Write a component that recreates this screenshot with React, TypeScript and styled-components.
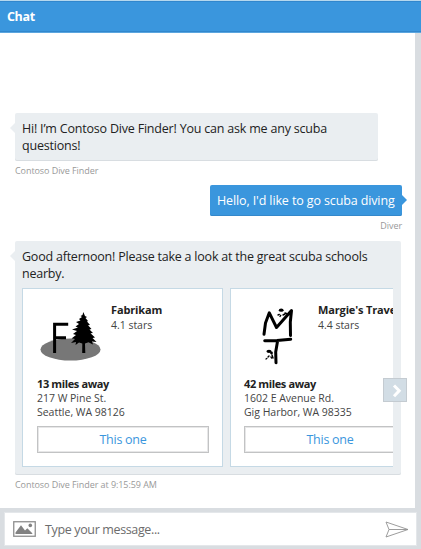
import React from "react";
import styled, { createGlobalStyle } from "styled-components";

const Global = createGlobalStyle`
  *, *::before, *::after { box-sizing: border-box; }
  body { margin: 0; background: #d9dde1; font-family: "Open Sans", "Noto Sans", sans-serif; }
  #root { height: 549px; }
`;

const Window = styled.div`
  width: 421px;
  height: 549px;
  display: flex;
  flex-direction: column;
  overflow: hidden;
  background: #d9dde1;
`;

const Header = styled.header`
  flex: none;
  height: 33px;
  padding: 0 7px;
  border-top: 1px solid #b5d8ee;
  border-bottom: 1px solid #5ba6df;
  box-shadow: inset 0 1px #3187cd, inset 0 -1px #3187cd;
  background: #3a96dd;
  color: #fff;
  font-size: 12.5px;
  font-weight: 700;
  line-height: 31px;
  letter-spacing: -0.35px;
`;

const Transcript = styled.main`
  flex: none;
  width: 415px;
  height: 475px;
  padding: 80px 13px 0 15px;
  background: #fff;
  display: flex;
  flex-direction: column;
  align-items: flex-start;
`;

const Bubble = styled.div<{ $own?: boolean; $width: number; $height: number }>`
  position: relative;
  flex: none;
  align-self: ${(p) => (p.$own ? "flex-end" : "flex-start")};
  width: ${(p) => p.$width}px;
  height: ${(p) => p.$height}px;
  padding: ${(p) => (p.$own ? "7px 6px 7px 7px" : "7px 7px 0")};
  border-radius: 2px;
  background: ${(p) => (p.$own ? "#3a96dd" : "#eaeef1")};
  box-shadow: inset 0 -1px ${(p) => (p.$own ? "#3488cb" : "#d8dde1")};
  color: ${(p) => (p.$own ? "#fff" : "#222")};

  &::before {
    content: "";
    position: absolute;
    top: 10px;
    ${(p) => (p.$own ? "right: -5px" : "left: -5px")};
    border: 5px solid transparent;
    ${(p) => (p.$own ? "border-right-width: 0; border-left-color: #3a96dd" : "border-left-width: 0; border-right-color: #eaeef1")};
  }
`;

const Message = styled.p<{ $spacing: number }>`
  margin: 0;
  font-size: 12.5px;
  line-height: 17px;
  letter-spacing: ${(p) => p.$spacing}px;
  white-space: nowrap;
`;

const Caption = styled.div<{ $own?: boolean; $gap: number }>`
  align-self: ${(p) => (p.$own ? "flex-end" : "flex-start")};
  height: 12px;
  margin: 4px 0 ${(p) => p.$gap}px;
  color: #999;
  font-size: 9px;
  line-height: 12px;
  letter-spacing: -0.07px;
  white-space: nowrap;
`;

const Carousel = styled.div`
  display: flex;
  gap: 7px;
  width: 371.4px;
  margin-top: 6px;
  overflow: hidden;
`;

const Card = styled.article<{ $inset: number }>`
  flex: none;
  width: 201px;
  height: 179px;
  padding: 14px 13px 0 ${(p) => p.$inset}px;
  border: 1px solid #c5d9e5;
  background: #fff;
`;

const CardTop = styled.div`
  display: flex;
  height: 74px;
`;

const Logo = styled.svg`
  flex: none;
  width: 74px;
  height: 66px;
`;

const Title = styled.div<{ $spacing: number }>`
  color: #222;
  font-size: 11px;
  font-weight: 700;
  line-height: 14px;
  letter-spacing: ${(p) => p.$spacing}px;
  white-space: nowrap;
`;

const Detail = styled.div`
  color: #444;
  font-size: 10.5px;
  line-height: 14px;
  letter-spacing: -0.02px;
  white-space: nowrap;
`;

const Rating = styled(Detail)`
  margin-top: 1px;
`;

const Choice = styled.button`
  display: block;
  width: 172px;
  height: 27px;
  margin-top: 7px;
  padding: 0;
  border: 1px solid #c2c3c4;
  box-shadow: inset 0 0 0 1px #e7e7e8;
  background: #fff;
  color: #3a96dd;
  font: 12.5px/25px "Open Sans", sans-serif;
  letter-spacing: -0.25px;
`;

const Next = styled.button`
  position: absolute;
  right: -6px;
  top: 137px;
  width: 24px;
  height: 24px;
  padding: 0;
  border: 1px solid #c4cbd1;
  background: #d2dde5;
  display: flex;
  align-items: center;
  justify-content: center;
`;

const Composer = styled.footer`
  display: flex;
  align-items: center;
  width: 413px;
  height: 34px;
  margin: 4px 0 0 4px;
  padding: 0 7px 0 8px;
  border: 1px solid #e4e7ea;
  background: #fff;
`;

const Placeholder = styled.span`
  flex: 1;
  margin-left: 9px;
  color: #6c6c6c;
  font-size: 12.5px;
  letter-spacing: -0.36px;
`;

const Fabrikam = () => (
  <Logo viewBox="37 303 74 66">
    <ellipse cx="70.5" cy="349.5" rx="30" ry="11" fill="#777" />
    <path d="M54.6 353V324.3H68.2M54.6 337.8H66" fill="none" stroke="#000" strokeWidth="3" />
    <path d="M83.3 312L85 316L87 317L85.5 318L88 321L87 321.5L90 325L88 325.3L91.5 329L89.5 329.5L93 333L90.5 333.3L95 337.5L92.5 338L96.5 342L92 341.5L93 344.5L88.5 342.3L85 343.5L85.3 353H82.2L82.3 343.5L79 342.5L75.5 345L76 342L71 343L75 339L71.5 338.5L76 335L73 334L77 331L72 329.5L78 327.5L75.5 326.5L79 324L76 322L80.5 320.5L79 319L82 317L80.5 316L82.5 315Z" />
  </Logo>
);

const Margies = () => (
  <Logo viewBox="244 303 74 66">
    <g fill="none" stroke="#000" strokeLinecap="round" strokeLinejoin="round">
      <path d="M264 334.3L265.5 323L269.3 312.8L276.5 327.5L291.5 310.5L290.3 322L290.5 335.5" strokeWidth="3" />
      <path d="M264.7 340.8L277 340.5L290.7 339.2M277.5 341.5L275.7 352L276 362.7" strokeWidth="3" />
      <path d="M278 315l1.3-.6M280 316.5l.7-1.2M283 315l2-1M285 313l1.5.4M266 359l.8-.5M268 357l1-1M271 357l.5 1M272 355l1 3" strokeWidth="1.4" />
    </g>
    <ellipse cx="281.2" cy="310.2" rx="2.4" ry="1.6" />
    <ellipse cx="269" cy="351.3" rx="2.6" ry="1.6" />
    <circle cx="271.5" cy="353" r="1.4" />
  </Logo>
);

const schools = [
  { name: "Fabrikam", inset: 14, stars: "4.1 stars", distance: "13 miles away", street: "217 W Pine St.", city: "Seattle, WA 98126", Art: Fabrikam },
  { name: "Margie's Travel", inset: 13, stars: "4.4 stars", distance: "42 miles away", street: "1602 E Avenue Rd.", city: "Gig Harbor, WA 98335", Art: Margies },
];

export default function App() {
  return (
    <Window>
      <Global />
      <Header>Chat</Header>
      <Transcript>
        <Bubble $width={363} $height={48}>
          <Message $spacing={-0.2}>Hi! I’m Contoso Dive Finder! You can ask me any scuba<br />questions!</Message>
        </Bubble>
        <Caption $gap={8}>Contoso Dive Finder</Caption>
        <Bubble $own $width={192} $height={31}>
          <Message $spacing={-0.12}>Hello, I'd like to go scuba diving</Message>
        </Bubble>
        <Caption $own $gap={9}>Diver</Caption>
        <Bubble $width={386} $height={234}>
          <Message $spacing={-0.22}>Good afternoon! Please take a look at the great scuba schools<br />nearby.</Message>
          <Carousel>
            {schools.map(({ Art, ...s }) => (
              <Card key={s.name} $inset={s.inset}>
                <CardTop>
                  <Art />
                  <div>
                    <Title $spacing={-0.15}>{s.name}</Title>
                    <Rating>{s.stars}</Rating>
                  </div>
                </CardTop>
                <Title $spacing={-0.37}>{s.distance}</Title>
                <Detail>{s.street}</Detail>
                <Detail>{s.city}</Detail>
                <Choice>This one</Choice>
              </Card>
            ))}
          </Carousel>
          <Next aria-label="Next">
            <svg width="22" height="22" viewBox="0 0 22 22" fill="none" stroke="#fff" strokeWidth="3">
              <path d="M10 6.5l5.2 5.2-5.2 5.6" />
            </svg>
          </Next>
        </Bubble>
        <Caption $gap={0}>Contoso Dive Finder at 9:15:59 AM</Caption>
      </Transcript>
      <Composer>
        <svg width="23" height="16" viewBox="0 0 23 16">
          <rect x=".75" y=".75" width="21.5" height="14.5" fill="#fff" stroke="#8e8e8e" strokeWidth="1.3" />
          <path d="M2.5 13V11.5L8 4.3l4 5.2 2.3-2.3 5 5V13z" fill="#828282" />
          <circle cx="17.3" cy="4.4" r="1.8" fill="#828282" />
        </svg>
        <Placeholder>Type your message...</Placeholder>
        <svg width="24" height="17" viewBox="0 0 24 17" fill="none" stroke="#929292" strokeWidth=".9">
          <path d="M1 1l22 7.5L1 16l3-7.5zM4 8.5h19" />
        </svg>
      </Composer>
    </Window>
  );
}
